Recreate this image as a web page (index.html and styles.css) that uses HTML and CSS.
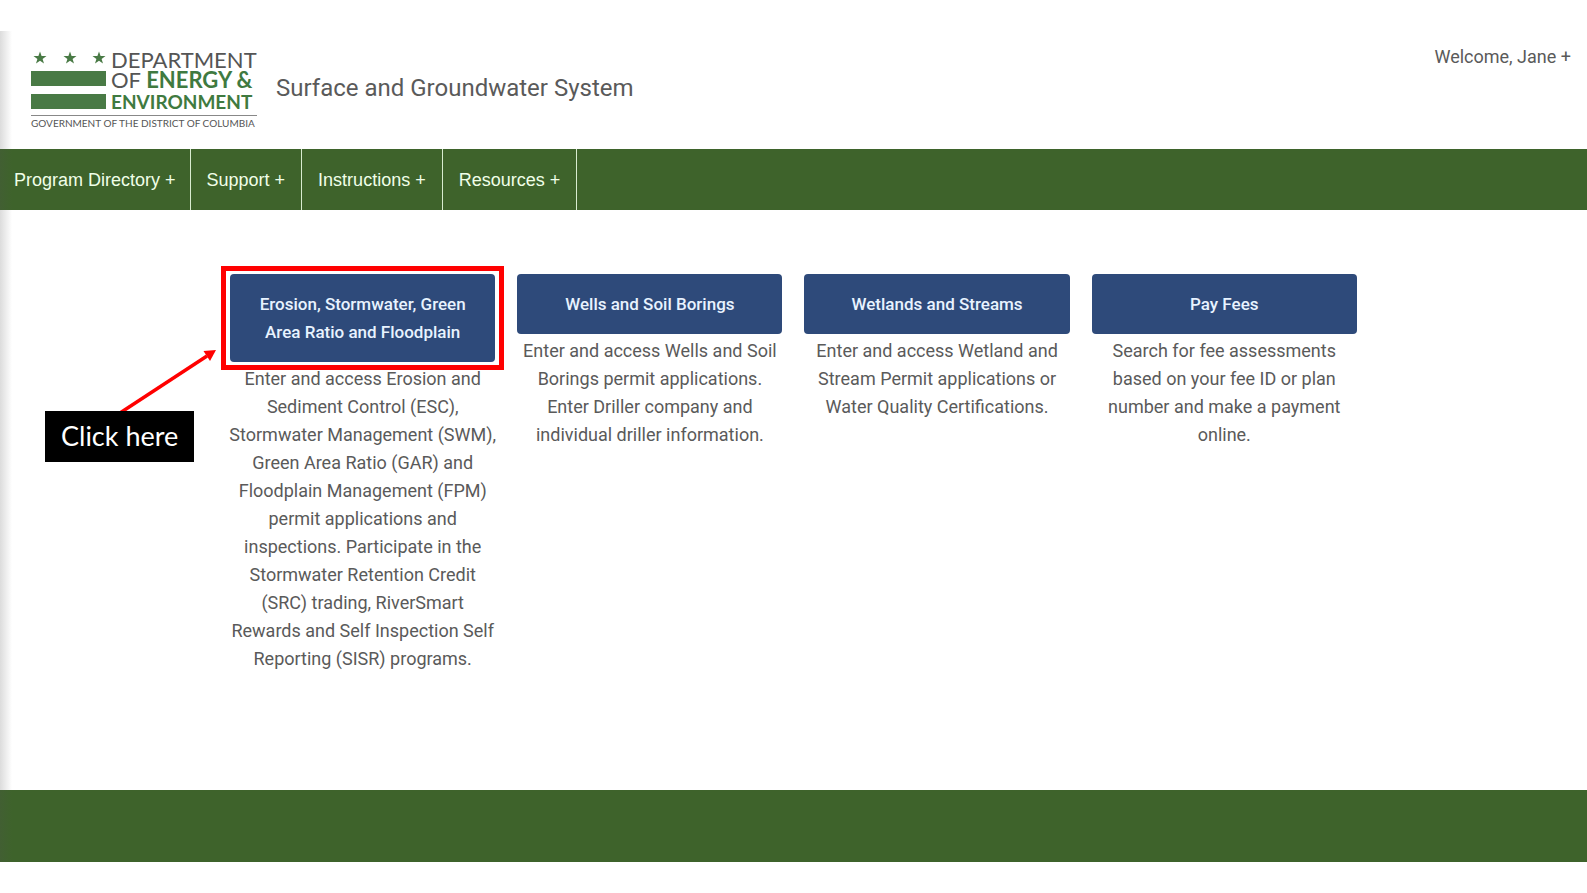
FILE: index.html
```html
<!DOCTYPE html>
<html lang="en">
<head>
<meta charset="utf-8">
<title>Surface and Groundwater System</title>
<link rel="stylesheet" href="styles.css">
</head>
<body>
<div class="page">
  <header class="header">
    <a class="brand" href="#">
      <svg class="logo" width="226" height="78" viewBox="0 0 226 78" role="img" aria-label="Department of Energy and Environment">
        <defs>
          <path id="star" d="M0-6.6 1.6-2 6.5-2 2.6 1 4 5.6 0 2.8-4 5.6-2.6 1-6.5-2-1.6-2Z"/>
        </defs>
        <g fill="#497a45">
          <use href="#star" x="9" y="7"/>
          <use href="#star" x="39" y="7"/>
          <use href="#star" x="68" y="7"/>
          <rect x="0" y="20" width="75" height="15"/>
          <rect x="0" y="43" width="75" height="15"/>
        </g>
        <rect x="0" y="64" width="226" height="1" fill="#888"/>
        <text class="logo-name" x="80" y="17">DEPARTMENT</text>
        <text class="logo-name" x="80" y="37">OF <tspan class="logo-strong">ENERGY &amp;</tspan></text>
        <text class="logo-name logo-strong logo-last" x="80" y="58">ENVIRONMENT</text>
        <text class="logo-gov" x="0" y="76">GOVERNMENT OF THE DISTRICT OF COLUMBIA</text>
      </svg>
    </a>
    <h1 class="title">Surface and Groundwater System</h1>
    <button class="account" type="button">Welcome, Jane +</button>
  </header>
  <nav class="nav">
    <a class="nav-item" href="#">Program Directory +</a>
    <a class="nav-item" href="#">Support +</a>
    <a class="nav-item" href="#">Instructions +</a>
    <a class="nav-item" href="#">Resources +</a>
  </nav>
  <main class="main">
    <section class="card card-marked">
      <button class="card-button" type="button">Erosion, Stormwater, Green Area Ratio and Floodplain</button>
      <p class="card-text">Enter and access Erosion and Sediment Control (ESC), Stormwater Management (SWM), Green Area Ratio (GAR) and Floodplain Management (FPM) permit applications and inspections. Participate in the Stormwater Retention Credit (SRC) trading, RiverSmart Rewards and Self Inspection Self Reporting (SISR) programs.</p>
      <svg class="arrow" width="100" height="64" viewBox="0 0 100 64" aria-hidden="true">
        <path d="M1 64 88 7" stroke="#f00" stroke-width="3.500" fill="none"/>
        <path d="M97 1 91 12 84.500 2Z" fill="#f00"/>
      </svg>
      <div class="callout">Click here</div>
    </section>
    <section class="card">
      <button class="card-button" type="button">Wells and Soil Borings</button>
      <p class="card-text">Enter and access Wells and Soil Borings permit applications. Enter Driller company and individual driller information.</p>
    </section>
    <section class="card">
      <button class="card-button" type="button">Wetlands and Streams</button>
      <p class="card-text">Enter and access Wetland and Stream Permit applications or Water Quality Certifications.</p>
    </section>
    <section class="card">
      <button class="card-button" type="button">Pay Fees</button>
      <p class="card-text">Search for fee assessments based on your fee ID or plan number and make a payment online.</p>
    </section>
  </main>
  <footer class="footer"></footer>
</div>
</body>
</html>
```
FILE: styles.css
```css
* {
  box-sizing: border-box;
}

body {
  margin: 0;
  background: #fff;
  color: #5a5a5a;
  font-family: Roboto, "Liberation Sans", sans-serif;
  font-size: 18px;
  line-height: 28px;
}

.page {
  position: relative;
  display: flex;
  flex-direction: column;
  min-height: calc(100vh - 62px);
  margin: 31px 0;
}

/* soft shade down the left edge */
.page::before {
  content: "";
  position: absolute;
  top: 0;
  bottom: 0;
  left: 0;
  width: 12px;
  background: linear-gradient(to right, rgba(80, 80, 80, 0.2), rgba(80, 80, 80, 0));
  pointer-events: none;
}

.header {
  display: flex;
  align-items: flex-start;
  gap: 19px;
  min-height: 118px;
  padding: 12px 16px 20px 31px;
}

.brand {
  display: block;
  height: 78px;
  margin-top: 8px;
}

.logo {
  display: block;
  overflow: visible;
}

.logo-name {
  fill: #555;
  font-family: Lato, sans-serif;
  font-size: 22px;
}

.logo-strong {
  fill: #3f7a40;
  font-weight: 700;
}

.logo-last {
  font-size: 19px;
}

.logo-gov {
  fill: #555;
  font-family: Lato, sans-serif;
  font-size: 10px;
}

.title {
  flex: 1;
  margin: 0;
  padding-top: 31px;
  font-size: 24px;
  font-weight: 400;
  line-height: 28px;
}

.account {
  padding: 0;
  border: 0;
  background: none;
  color: inherit;
  font: inherit;
}

.nav {
  display: flex;
  min-height: 61px;
  background: #3e632b;
}

.nav-item {
  display: flex;
  align-items: center;
  padding: 0 16px;
  border-right: 1px solid #d8ecd0;
  color: #f0ffe8;
  font-family: "Liberation Sans", sans-serif;
  font-size: 18px;
  text-decoration: none;
}

.nav-item:first-child {
  padding: 0 14px;
}

.main {
  flex: 1;
  display: grid;
  grid-template-columns: repeat(4, 1fr);
  align-items: start;
  gap: 22px;
  width: 71%;
  margin: 0 auto;
  padding: 64px 0 40px;
}

.card {
  text-align: center;
}

.card-button {
  display: block;
  width: 100%;
  padding: 16px 20px;
  border: 0;
  border-radius: 4px;
  background: #2e4a7a;
  color: #e8f3ff;
  font: inherit;
  font-size: 17px;
  font-weight: 500;
}

.card-text {
  margin: 3px -2px 0;
}

.card-marked,
.card-marked .card-button {
  position: relative;
}

.card-marked .card-button::after {
  content: "";
  position: absolute;
  inset: -8px -9px;
  border: 5px solid #f00;
}

.arrow {
  position: absolute;
  top: 75px;
  left: -111px;
}

.callout {
  position: absolute;
  top: 137px;
  left: -185px;
  width: 149px;
  padding: 11px 0 12px;
  background: #000;
  color: #fff;
  font-family: Lato, sans-serif;
  font-size: 27px;
}

.footer {
  min-height: 72px;
  background: #3e632b;
}
```
